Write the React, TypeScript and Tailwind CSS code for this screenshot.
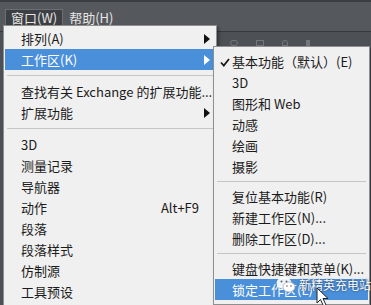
import React from "react";

type Item =
  | { kind: "sep" }
  | {
      kind: "item";
      label: string;
      arrow?: boolean;
      active?: boolean;
      check?: boolean;
      shortcut?: string;
    };

const mainItems: Item[] = [
  { kind: "item", label: "排列(A)", arrow: true },
  { kind: "item", label: "工作区(K)", arrow: true, active: true },
  { kind: "sep" },
  { kind: "item", label: "查找有关 Exchange 的扩展功能..." },
  { kind: "item", label: "扩展功能", arrow: true },
  { kind: "sep" },
  { kind: "item", label: "3D" },
  { kind: "item", label: "测量记录" },
  { kind: "item", label: "导航器" },
  { kind: "item", label: "动作", shortcut: "Alt+F9" },
  { kind: "item", label: "段落" },
  { kind: "item", label: "段落样式" },
  { kind: "item", label: "仿制源" },
  { kind: "item", label: "工具预设" },
];

const subItems: Item[] = [
  { kind: "item", label: "基本功能（默认）(E)", check: true },
  { kind: "item", label: "3D" },
  { kind: "item", label: "图形和 Web" },
  { kind: "item", label: "动感" },
  { kind: "item", label: "绘画" },
  { kind: "item", label: "摄影" },
  { kind: "sep" },
  { kind: "item", label: "复位基本功能(R)" },
  { kind: "item", label: "新建工作区(N)..." },
  { kind: "item", label: "删除工作区(D)..." },
  { kind: "sep" },
  { kind: "item", label: "键盘快捷键和菜单(K)..." },
  { kind: "item", label: "锁定工作区(L)", active: true },
];

const Arrow = ({ white }: { white?: boolean }) => (
  <svg width="6" height="10" viewBox="0 0 6 10" className="absolute right-[5px] top-[6px]">
    <path d="M0 0 L6 5 L0 10 Z" fill={white ? "#ffffff" : "#111111"} />
  </svg>
);

const Check = () => (
  <svg width="10" height="9" viewBox="0 0 10 9" className="absolute left-[5px] top-[7px]">
    <path d="M1 4.5 L3.8 7.5 L9 1" stroke="#1a1a1a" strokeWidth="1.8" fill="none" />
  </svg>
);

const MenuList = ({ items, pad, sepH }: { items: Item[]; pad: string; sepH: string }) => (
  <>
    {items.map((it, i) =>
      it.kind === "sep" ? (
        <div key={i} className={`${sepH} flex items-center px-[2px]`}>
          <div className="w-full border-t border-[#c6c6c6]" />
        </div>
      ) : (
        <div
          key={i}
          className={`relative h-[21px] flex items-center whitespace-nowrap ${pad} ${
            it.active ? "bg-[#4a8fd9] text-white" : "text-[#1b1b1b]"
          }`}
        >
          {it.check && <Check />}
          <span>{it.label}</span>
          {it.shortcut && <span className="ml-auto pr-[16px]">{it.shortcut}</span>}
          {it.arrow && <Arrow white={it.active} />}
        </div>
      )
    )}
  </>
);

export default function App() {
  return (
    <div
      className="relative w-[371px] h-[305px] overflow-hidden bg-[#4d5055] text-[13px] leading-none"
      style={{ fontFamily: '"Noto Sans CJK SC", "Noto Sans", sans-serif' }}
    >
      {/* menu bar */}
      <div className="h-[32px] bg-[#55585d] border-t-2 border-[#3a3d41] border-b border-b-[#37393d] flex items-start pt-[7px] pl-[5px] text-[#e6e6e6]">
        <div className="h-[17px] px-[5px] flex items-center bg-[#3c3f43] border border-[#6b6e72]">窗口(W)</div>
        <div className="h-[17px] px-[6px] flex items-center">帮助(H)</div>
      </div>

      {/* faint toolbar icons */}
      <div className="absolute left-[230px] top-[40px] flex gap-[18px] opacity-30">
        <div className="w-[8px] h-[6px] border border-[#cfcfcf] rounded-full" />
        <div className="w-[8px] h-[6px] border border-[#cfcfcf]" />
        <div className="w-[6px] h-[6px] border border-[#cfcfcf] rounded-t-full" />
        <div className="w-[4px] h-[6px] bg-[#cfcfcf]" />
      </div>

      {/* main menu */}
      <div className="absolute left-[3px] top-[25px] w-[214px] bg-[#f0f0f0] border border-[#8f8f8f] pt-[2px] pb-[4px] px-[1px] shadow-[2px_2px_3px_rgba(0,0,0,0.35)]">
        <MenuList items={mainItems} pad="pl-[16px]" sepH="h-[11px]" />
      </div>

      {/* workspace submenu */}
      <div className="absolute left-[213px] top-[46px] w-[157px] bg-[#f0f0f0] border border-[#8f8f8f] pt-[4px] pb-[4px] px-[1px] shadow-[2px_2px_3px_rgba(0,0,0,0.35)]">
        <MenuList items={subItems} pad="pl-[17px]" sepH="h-[9px]" />
      </div>

      {/* watermark */}
      <div className="absolute left-[276px] top-[276px] flex items-center gap-[3px]">
        <svg width="20" height="17" viewBox="0 0 20 17">
          <ellipse cx="8" cy="7" rx="7.5" ry="6" fill="#ffffff" fillOpacity="0.9" />
          <ellipse cx="13" cy="11" rx="6" ry="5" fill="#ffffff" stroke="#9a9a9a" strokeWidth="0.6" />
          <circle cx="5.5" cy="5.5" r="1" fill="#666" />
          <circle cx="10.5" cy="5.5" r="1" fill="#666" />
          <circle cx="11" cy="10" r="0.8" fill="#666" />
          <circle cx="15" cy="10" r="0.8" fill="#666" />
        </svg>
        <span className="text-white text-[12px] [text-shadow:0_0_2px_rgba(0,0,0,0.7)]">新精英充电站</span>
      </div>
      <svg width="14" height="20" viewBox="0 0 14 20" className="absolute left-[316px] top-[287px]">
        <path d="M1 1 L1 16 L4.5 12.5 L7.5 19 L10 18 L7 11.5 L12 11.5 Z" fill="#ffffff" stroke="#222" strokeWidth="1" />
      </svg>
    </div>
  );
}
